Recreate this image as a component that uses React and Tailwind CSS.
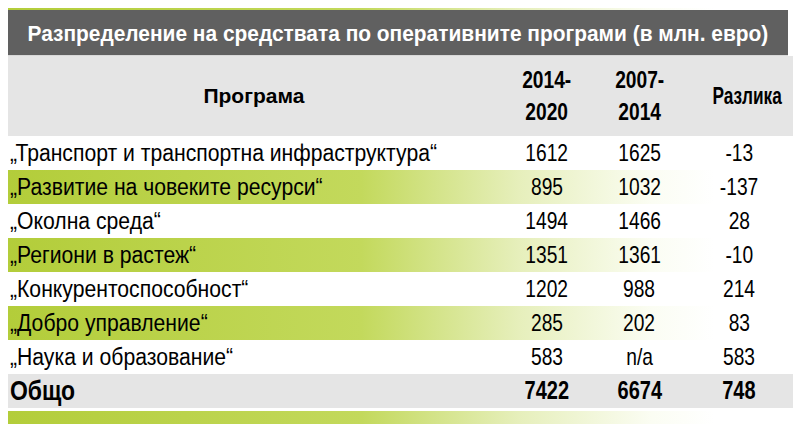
const rows = [
  { name: "„Транспорт и транспортна инфраструктура“", a: "1612", b: "1625", c: "-13" },
  { name: "„Развитие на човеките ресурси“", a: "895", b: "1032", c: "-137" },
  { name: "„Околна среда“", a: "1494", b: "1466", c: "28" },
  { name: "„Региони в растеж“", a: "1351", b: "1361", c: "-10" },
  { name: "„Конкурентоспособност“", a: "1202", b: "988", c: "214" },
  { name: "„Добро управление“", a: "285", b: "202", c: "83" },
  { name: "„Наука и образование“", a: "583", b: "n/a", c: "583" },
];

const green =
  "bg-[linear-gradient(to_right,#b3cd3a_0%,#c3d95c_45%,#e6efbb_65%,#fbfdf3_82%,#ffffff_90%)]";

// narrow look: the original uses a condensed face
const Num = ({ children }) => (
  <span className="inline-block [transform:scaleX(0.8)]">{children}</span>
);

export default function App() {
  return (
    <div
      className="w-[800px] h-[435px] bg-white pt-2 pl-2 text-black overflow-hidden"
      style={{ fontFamily: '"Liberation Sans", Arial, sans-serif' }}
    >
      <div className="w-[785px]">
        <div className={`h-[2px] ${green}`} />
        <div className="h-[46px] mr-[5px] bg-[#606060] text-white font-bold text-[22px] flex items-center justify-center border-b border-[#d8d8d8]">
          <span className="inline-block [transform:scaleX(0.95)] pt-[2px]">
            Разпределение на средствата по оперативните програми (в млн. евро)
          </span>
        </div>
        <div className="h-[80px] bg-[#e5e5e5] flex items-center font-bold text-[21px] leading-[32px]">
          <div className="w-[492px] text-center">Програма</div>
          <div className="w-[94px] text-center text-[24px]"><Num>2014-<br />2020</Num></div>
          <div className="w-[91px] text-center text-[24px]"><Num>2007-<br />2014</Num></div>
          <div className="flex-1 text-center pl-4 text-[23px]">
            <span className="inline-block [transform:scaleX(0.75)]">Разлика</span>
          </div>
        </div>
        {rows.map((r, i) => (
          <div
            key={r.name}
            className={`h-[34px] flex items-center ${i % 2 === 1 ? green : "bg-white"}`}
          >
            <div className="w-[492px] pl-[2px] text-[23px]">
              <span className="inline-block origin-left [transform:scaleX(0.92)] whitespace-nowrap">{r.name}</span>
            </div>
            <div className="w-[94px] text-center text-[24px]"><Num>{r.a}</Num></div>
            <div className="w-[91px] text-center text-[24px]"><Num>{r.b}</Num></div>
            <div className="flex-1 text-center text-[24px]"><Num>{r.c}</Num></div>
          </div>
        ))}
        <div className="h-[34px] flex items-center bg-[#e5e5e5] font-bold text-[25px]">
          <div className="w-[492px] pl-[2px] text-[27px]">
            <span className="inline-block origin-left [transform:scaleX(0.85)]">Общо</span>
          </div>
          <div className="w-[94px] text-center"><Num>7422</Num></div>
          <div className="w-[91px] text-center"><Num>6674</Num></div>
          <div className="flex-1 text-center"><Num>748</Num></div>
        </div>
        <div className={`mt-[3px] h-[13px] ${green}`} />
      </div>
    </div>
  );
}
